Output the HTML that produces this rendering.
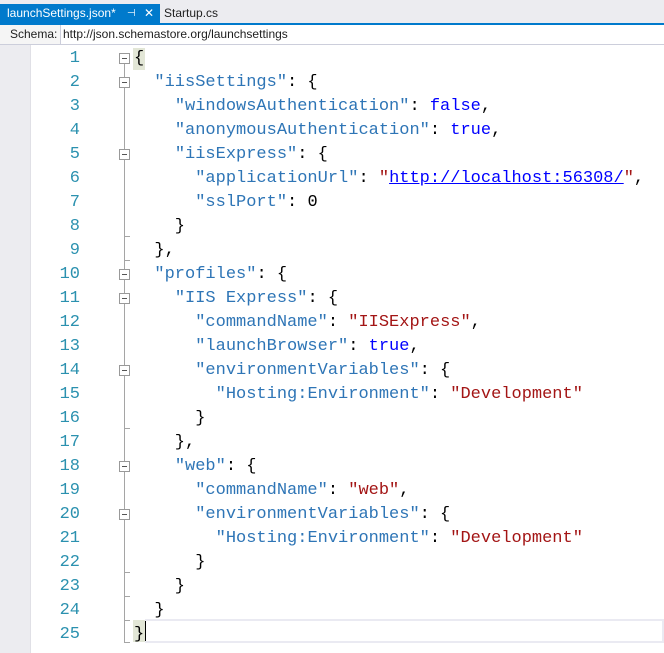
<!DOCTYPE html>
<html><head><style>
body{margin:0;width:664px;height:653px;background:#fff;position:relative;overflow:hidden;font-family:"Liberation Sans",sans-serif}
.tabs{position:absolute;left:0;top:0;width:664px;height:23px;background:#ECECF0}
.tab{position:absolute;left:0;top:4px;width:160px;height:19px;background:#007ACC;color:#fff;font-size:12px;line-height:19px;padding-left:7px;box-sizing:border-box}
.tab2{position:absolute;left:164px;top:4px;height:19px;font-size:12px;line-height:19px;color:#1E1E1E}
.bl{position:absolute;left:0;top:23px;width:664px;height:2px;background:#007ACC}
.schema{position:absolute;left:0;top:25px;width:664px;height:19px;border-bottom:1px solid #CCCEDB;background:#F5F5F5;font-size:12px;line-height:19px}
.schema .l{position:absolute;left:10px;color:#1E1E1E}
.schema .i{position:absolute;left:60px;top:0;right:0;height:19px;background:#fff;border-left:1px solid #CCCEDB;padding-left:2px;color:#1E1E1E}
.gut{position:absolute;left:0;top:45px;width:30px;height:608px;background:#ECECF0;border-right:1px solid #E0E0E6}
.ln{position:absolute;left:30px;width:50px;text-align:right;color:#2B91AF;font-family:"Liberation Mono",monospace;font-size:17px;line-height:24px}
.code{position:absolute;left:134px;top:47px;font-family:"Liberation Mono",monospace;font-size:17px;line-height:24px;white-space:pre;color:#000}
.k{color:#2E75B6}.s{color:#A31515}.b{color:#0000FF}.u{color:#0000FF;text-decoration:underline}
.box{position:absolute;left:119px;width:11px;height:11px;border:1px solid #999;background:#fff;box-sizing:border-box}
.box:after{content:"";position:absolute;left:2px;top:4px;width:5px;height:1px;background:#555}
.vl{position:absolute;left:124px;width:1px;background:#A5A5A5}
.tk{position:absolute;left:124px;width:6px;height:1px;background:#A5A5A5}
</style></head><body>
<div class="tabs"></div>
<div class="tab">launchSettings.json*<span style="position:absolute;left:127px;top:0;font-size:10px">⊣</span><span style="position:absolute;left:144px;top:0;font-size:12px">✕</span></div>
<div class="tab2">Startup.cs</div>
<div class="bl"></div>
<div class="schema"><span class="l">Schema:</span><div class="i">http://json.schemastore.org/launchsettings</div></div>
<div class="gut"></div>
<div class="ln" style="top:47px">1<br>2<br>3<br>4<br>5<br>6<br>7<br>8<br>9<br>10<br>11<br>12<br>13<br>14<br>15<br>16<br>17<br>18<br>19<br>20<br>21<br>22<br>23<br>24<br>25</div>
<div class="vl" style="top:64px;height:578px"></div>
<div class="tk" style="top:236px"></div>
<div class="tk" style="top:260px"></div>
<div class="tk" style="top:428px"></div>
<div class="tk" style="top:572px"></div>
<div class="tk" style="top:596px"></div>
<div class="tk" style="top:620px"></div>
<div class="tk" style="top:642px"></div>
<div class="box" style="top:53px"></div>
<div class="box" style="top:77px"></div>
<div class="box" style="top:149px"></div>
<div class="box" style="top:269px"></div>
<div class="box" style="top:293px"></div>
<div class="box" style="top:365px"></div>
<div class="box" style="top:461px"></div>
<div class="box" style="top:509px"></div>
<div style="position:absolute;left:133px;top:48px;width:12px;height:22px;background:#E2E6D6"></div>
<div style="position:absolute;left:133px;top:620px;width:12px;height:22px;background:#E2E6D6"></div>
<div style="position:absolute;left:145px;top:619px;width:519px;height:24px;border:2px solid #EAEAF2;border-left:none;box-sizing:border-box"></div>
<div style="position:absolute;left:145px;top:621px;width:1px;height:20px;background:#000"></div>
<div class="code">{
  <span class="k">"iisSettings"</span>: {
    <span class="k">"windowsAuthentication"</span>: <span class="b">false</span>,
    <span class="k">"anonymousAuthentication"</span>: <span class="b">true</span>,
    <span class="k">"iisExpress"</span>: {
      <span class="k">"applicationUrl"</span>: <span class="s">"<span class="u">http://localhost:56308/</span>"</span>,
      <span class="k">"sslPort"</span>: 0
    }
  },
  <span class="k">"profiles"</span>: {
    <span class="k">"IIS Express"</span>: {
      <span class="k">"commandName"</span>: <span class="s">"IISExpress"</span>,
      <span class="k">"launchBrowser"</span>: <span class="b">true</span>,
      <span class="k">"environmentVariables"</span>: {
        <span class="k">"Hosting:Environment"</span>: <span class="s">"Development"</span>
      }
    },
    <span class="k">"web"</span>: {
      <span class="k">"commandName"</span>: <span class="s">"web"</span>,
      <span class="k">"environmentVariables"</span>: {
        <span class="k">"Hosting:Environment"</span>: <span class="s">"Development"</span>
      }
    }
  }
}</div>
</body></html>
